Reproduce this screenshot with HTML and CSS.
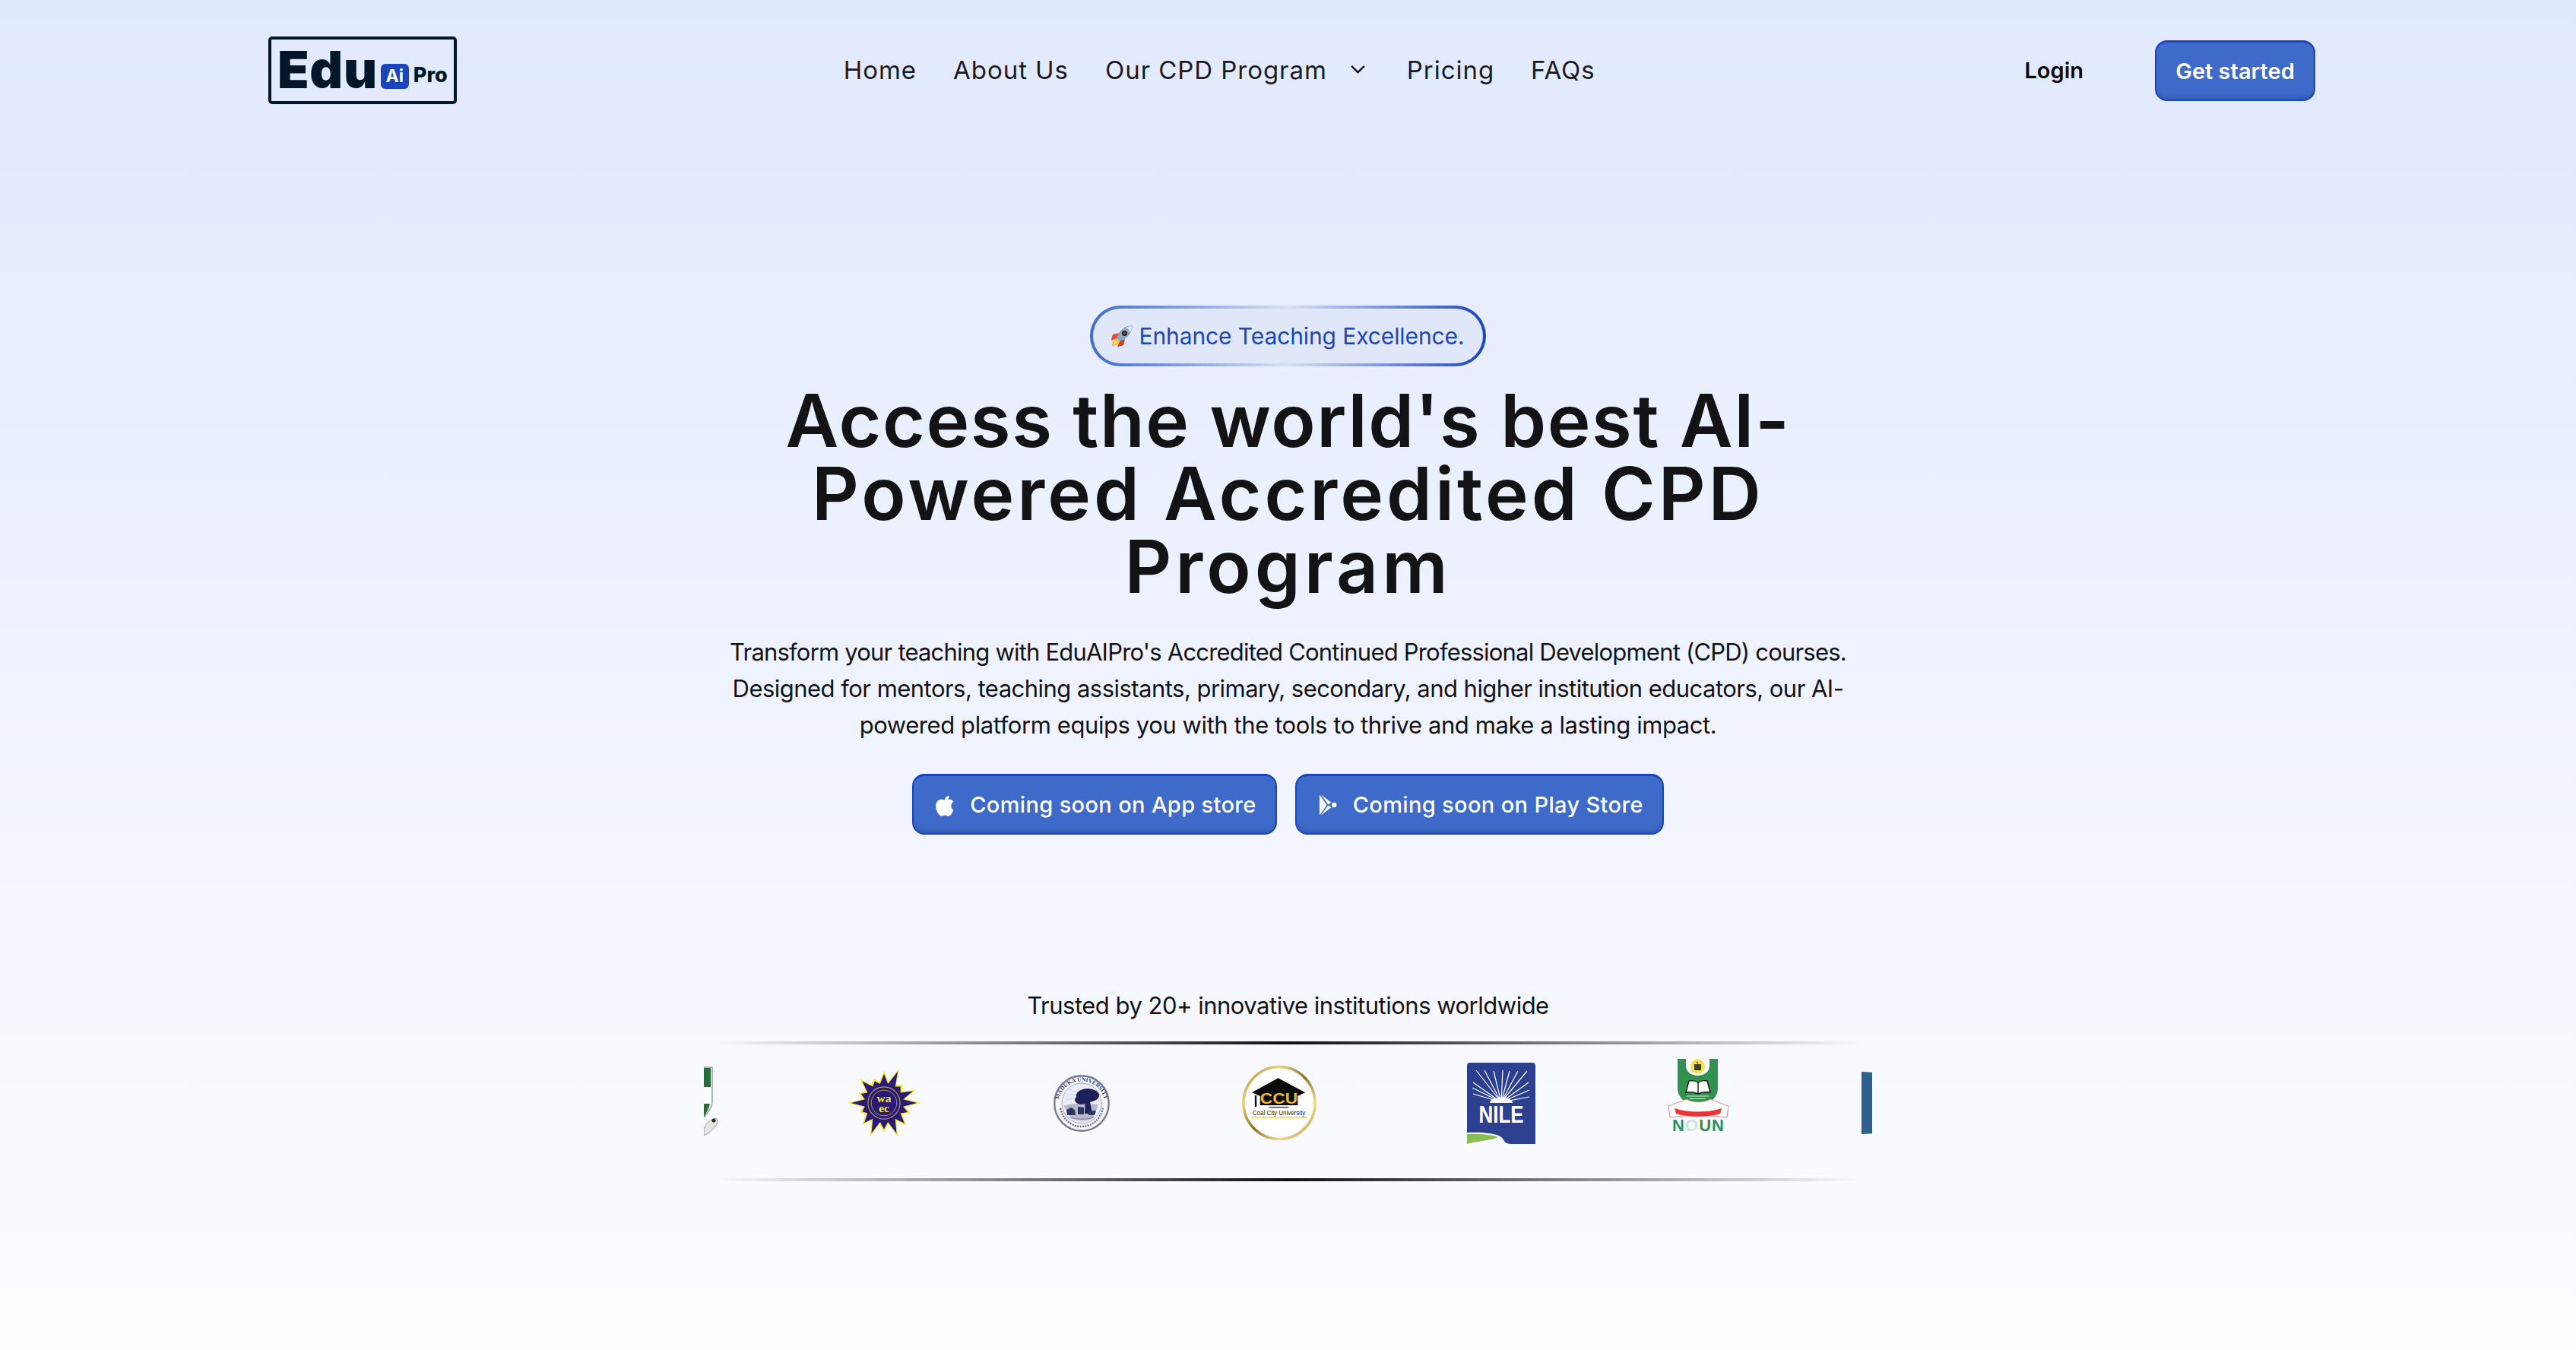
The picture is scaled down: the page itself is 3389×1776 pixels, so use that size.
FILE: index.html
```html
<!DOCTYPE html>
<html lang="en">
<head>
    <meta charset="UTF-8">
    <meta name="viewport" content="width=device-width, initial-scale=1.0">
    <title>EduAiPro</title>
    <link rel="stylesheet" href="styles.css">
</head>
<body>
    <header class="site-header">
        <a class="logo" href="#">
            <span class="logo-edu">Edu</span>
            <span class="logo-ai">Ai</span>
            <span class="logo-pro">Pro</span>
        </a>
        <nav class="main-nav">
            <a href="#">Home</a>
            <a href="#">About Us</a>
            <a class="has-menu" href="#">Our CPD Program
                <svg class="chevron" viewBox="0 0 24 14" fill="none" stroke="#1b1b1f" stroke-width="2.6"><path d="M3 2l9 9 9-9"/></svg>
            </a>
            <a href="#">Pricing</a>
            <a href="#">FAQs</a>
        </nav>
        <div class="header-actions">
            <a class="login" href="#">Login</a>
            <a class="btn btn-start" href="#">Get started</a>
        </div>
    </header>

    <main class="hero">
        <div class="badge">
            <svg class="rocket" viewBox="0 0 28 28">
                <path d="M10 10L2 12-.5 20l8-3z" fill="#e4472c"/>
                <path d="M18 18l-2 8-8 2.500 3-8z" fill="#d83c25"/>
                <path d="M6 17c-4 2-5 7-5 10 3 0 8-1 10-5z" fill="#f8b82e"/>
                <path d="M5.500 19.500c-1.500 1.500-2 3.500-2 5 2 0 4-1 5-2.500z" fill="#fde98a"/>
                <path d="M27.500.5C20 1 13 5 9.500 12L7 16.500l4.500 4.500 4.500-2.500c7-4 11-11 11.500-18z" fill="#8fa9c0" stroke="#5f7a92" stroke-width=".6"/>
                <path d="M27.500.5c-3 .2-6 1.200-8.500 3 3 .7 5 2.700 5.700 5.700 1.800-2.700 2.700-5.700 2.800-8.700z" fill="#dfe7ee"/>
                <circle cx="17.500" cy="10.500" r="3.600" fill="#1c2733"/>
                <circle cx="17.500" cy="10.500" r="1.500" fill="#c8432c"/>
            </svg>
            <span>Enhance Teaching Excellence.</span>
        </div>
        <h1>
            <span class="h1-line">Access the world's best AI-</span>
            <span class="h1-line h1-line-two">Powered Accredited CPD</span>
            <span class="h1-line h1-line-three">Program</span>
        </h1>
        <p class="intro">
            <span class="intro-line">Transform your teaching with EduAIPro's Accredited Continued Professional Development (CPD) courses.</span>
            <span class="intro-line intro-line-two">Designed for mentors, teaching assistants, primary, secondary, and higher institution educators, our AI-</span>
            <span class="intro-line intro-line-three">powered platform equips you with the tools to thrive and make a lasting impact.</span>
        </p>
        <div class="store-buttons">
            <a class="btn btn-store" href="#">
                <svg class="store-icon" viewBox="0 0 24 28" fill="#fff"><path d="M17 2c.2 2-.5 3.500-1.500 4.700-1 1.100-2.500 2-4 1.900-.2-1.800.6-3.500 1.500-4.500C14 3 15.600 2.200 17 2zM22.500 20.500c-.7 1.600-1 2.300-1.900 3.700-1.200 1.900-2.900 3.700-4.600 3.700-1.700 0-2.200-1-4.300-1-2.200 0-2.600 1-4.300 1-2 0-3.500-2-4.700-3.900C-.3 19.400-.6 13.500 1.400 10.400 2.800 8.200 5 6.900 7.100 6.900c2.100 0 3.500 1.100 5.200 1.100 1.700 0 2.700-1.100 5.200-1.100 1.900 0 3.800 1 5.200 2.700-4.600 2.500-3.800 9.100-.2 10.900z"/></svg>
                Coming soon on App store
            </a>
            <a class="btn btn-store" href="#">
                <svg class="store-icon" viewBox="0 0 26 28" fill="#fff"><path d="M1 0l10 14L1 28z"/><path d="M3 0l14 10.500-4 3z"/><path d="M3 28l14-10.500-4-3z"/><circle cx="21" cy="14" r="3.400"/></svg>
                Coming soon on Play Store
            </a>
        </div>

        <p class="trusted">Trusted by 20+ innovative institutions worldwide</p>
        <div class="logo-strip">
            <div class="logo-track">
                <svg class="inst inst-kwasu" viewBox="0 0 100 94">
                    <path d="M60 1h32v46c0 6-4 12-11 20H60z" fill="#fff" stroke="#8fa695" stroke-width="1.500"/>
                    <path d="M60 2h30v25H60z" fill="#2c6b3a"/>
                    <path d="M60 49h29c-1 6-4 11-8 17H60z" fill="#2c6b3a"/>
                    <path d="M81 82c2-6 8-12 15-14 3 1 4 4 3 6-4 8-10 13-18 17z" fill="#e3e7e3" stroke="#9aa29c" stroke-width="1"/>
                    <circle cx="94" cy="71" r="2.500" fill="#222"/>
                </svg>
                <svg class="inst inst-waec" viewBox="-50 -50 100 100">
                    <defs>
                        <polygon id="burst" points="50,0 29,5.500 36,13.800 25,15.600 31,31 17,24 19.100,46.200 6,29 0,40 -6,29 -19.100,46.200 -17,24 -30,30 -25,15.600 -33,13 -29,5.500 -50,0 -29,-5.500 -35,-13.800 -25,-15.600 -33,-33 -17,-25 -14,-33 -6,-29 0,-44 6,-29 21,-48 17,-25 25,-25 25,-15.600 44,-18 29,-5.500"/>
                    </defs>
                    <use href="#burst" fill="#f4e92a"/>
                    <use href="#burst" fill="#2a1a78" transform="scale(.9)"/>
                    <circle r="22" fill="#2a1a78" stroke="#b59f4a" stroke-width="1.200"/>
                    <circle r="17.500" fill="none" stroke="#b59f4a" stroke-width="1"/>
                    <text class="waec-text" y="-1" text-anchor="middle">wa</text>
                    <text class="waec-text" y="12" text-anchor="middle">ec</text>
                </svg>
                <svg class="inst inst-seal" viewBox="0 0 74 75">
                    <ellipse cx="37" cy="37.500" rx="35.800" ry="36.300" fill="#f6f7fb" stroke="#777996" stroke-width="2.400"/>
                    <ellipse cx="37" cy="37.500" rx="26" ry="26.500" fill="#eceef5" stroke="#8e90a8" stroke-width=".8"/>
                    <path id="sealArc" d="M6.500 37C7 19 20 6.500 37 6.500S67 19 67.500 37" fill="none" transform="translate(0 2)"/>
                    <text class="seal-text"><textPath href="#sealArc" startOffset="50%" text-anchor="middle">MADUKA UNIVERSITY</textPath></text>
                    <path d="M9 44C13 60 24 68 37 68s24-8 28-24" fill="none" stroke="#6f7190" stroke-width="2.400" stroke-dasharray="2 1.400"/>
                    <g stroke="#c4c7d8" stroke-width=".7">
                        <path d="M33 26L17 26M33 29L16 33M33 23L20 19M36 22L28 14"/>
                    </g>
                    <path d="M13 41c8-3 18-4 46-2l-6 17c-8 6-22 6-30 0z" fill="#b6b9cc"/>
                    <ellipse cx="45" cy="27" rx="15" ry="9" fill="#1c2257"/>
                    <ellipse cx="37" cy="33" rx="9" ry="6" fill="#1c2257"/>
                    <path d="M42 30h5l4 21h-10z" fill="#1c2257"/>
                    <path d="M17 46l6-3 5 3 1 7H18zM32 42l8 1v9h-8zM46 48l10-1-2 6H46z" fill="#2e3462"/>
                    <path d="M21 56c8 3 24 3 32 0" fill="none" stroke="#7b7e9c" stroke-width="1"/>
                </svg>
                <svg class="inst inst-ccu" viewBox="0 0 100 100">
                    <defs>
                        <linearGradient id="gold" x1="0" y1="0" x2="1" y2="1">
                            <stop offset="0" stop-color="#a98a3a"/>
                            <stop offset=".25" stop-color="#e8d27a"/>
                            <stop offset=".5" stop-color="#8c6f26"/>
                            <stop offset=".75" stop-color="#f0dc8c"/>
                            <stop offset="1" stop-color="#b08f34"/>
                        </linearGradient>
                    </defs>
                    <ellipse cx="49.500" cy="50" rx="47.500" ry="48" fill="#fff" stroke="url(#gold)" stroke-width="3.600"/>
                    <path d="M48 17l36 19-10 5v12H24V41l-11-5z" fill="#0a0a0a"/>
                    <path d="M17 40h2.400v15H17z" fill="#0a0a0a"/>
                    <text class="ccu-mark" x="49" y="51" text-anchor="middle" textLength="50" lengthAdjust="spacingAndGlyphs">CCU</text>
                    <path d="M36 55h26v1.400H36z" fill="#333"/>
                    <text class="ccu-name" x="49" y="66" text-anchor="middle" textLength="70" lengthAdjust="spacingAndGlyphs">Coal City University</text>
                    <path d="M12 68.500h75v1.800H12z" fill="#ecd27a"/>
                </svg>
                <svg class="inst inst-nile" viewBox="0 0 90 107">
                    <path d="M4 0h82a4 4 0 0 1 4 4v103H58c-8 0-9-4-11-7-3-5-17-9-47-8V4a4 4 0 0 1 4-4z" fill="#2d408f"/>
                    <path d="M0 94c16-1 34 1 41 4-7 4-27 5-41 9z" fill="#8bbd55"/>
                    <g stroke="#fff" stroke-width="1.200" fill="none">
                        <path d="M45 52L12 10M45 52L23 10M45 52L35 11M45 52L47 10M45 52L56 11M45 52L67 11M45 52L79 11M45 52L81 26M45 52L82 36M45 52L82 45M45 52L8 41M45 52L7 33M45 52L8 26"/>
                    </g>
                    <path d="M30 53a15 7 0 0 1 30 0z" fill="#fff"/>
                    <text class="nile-text" x="45" y="79" text-anchor="middle" textLength="59" lengthAdjust="spacingAndGlyphs">NILE</text>
                </svg>
                <svg class="inst inst-noun" viewBox="0 0 81 100">
                    <path d="M13 0h53v38c0 13-11 23-26.500 23S13 51 13 38z" fill="#32914f"/>
                    <path d="M24 0h31v9c0 8-7 13-15.500 13S24 17 24 9z" fill="#fbfbff"/>
                    <circle cx="39.500" cy="10" r="9.500" fill="#f0e24a"/>
                    <path d="M35 7h9v8h-9z" fill="#3a4029"/>
                    <path d="M39 3l1.500 3h-3z" fill="#c9342b"/>
                    <path d="M28 29c5-1 9 0 12 2 3-2 7-3 12-2l4 15c-6-1-11 0-16 2-5-2-10-3-16-2z" fill="#fff" stroke="#111" stroke-width="1.400"/>
                    <path d="M40 31v15" stroke="#111" stroke-width="1.400"/>
                    <path d="M25 49h29M29 52.500h21" stroke="#d5ecd9" stroke-width="1"/>
                    <path d="M1 62l24-9c6 5 25 5 31 0l24 9-2 15-20-2H21l-18 2z" fill="#fcfcff" stroke="#e68a8a" stroke-width="1"/>
                    <path d="M9 65c18 6 44 6 62 0l-2 7c-16 5-42 5-58 0z" fill="#ea3434"/>
                    <text class="noun-text" x="40" y="95" text-anchor="middle" textLength="68">N<tspan fill="#c8e6d0">O</tspan>UN</text>
                </svg>
                <svg class="inst inst-tail" viewBox="0 0 100 82">
                    <path d="M0 0l100 6v70L0 82z" fill="#2f5f8c"/>
                </svg>
            </div>
        </div>
    </main>
</body>
</html>
```

FILE: styles.css
```css
/* Page background */
html, body {
    margin: 0;
    padding: 0;
}

body {
    min-height: 1776px;
    font-family: "Inter", "Liberation Sans", sans-serif;
    color: #131316;
    background: linear-gradient(180deg, #e1e9fd 0%, #fdfdff 100%);
    overflow: hidden;
}

a {
    color: inherit;
    text-decoration: none;
}

/* Header */
.site-header {
    display: flex;
    align-items: center;
    justify-content: space-between;
    padding: 48px 343px 0 353px;
    height: 89px;
}

.logo {
    display: flex;
    align-items: flex-end;
    box-sizing: border-box;
    width: 248px;
    height: 89px;
    padding: 0 0 16px 8px;
    border: 4px solid #05162b;
    border-radius: 5px;
    color: #05162b;
}

.logo-edu {
    font-size: 68px;
    font-weight: 900;
    line-height: 52px;
    letter-spacing: 0.7px;
}

.logo-ai {
    margin: 0 6px 0 4px;
    flex: none;
    width: 37px;
    height: 33px;
    border-radius: 6px;
    background: #1c45bb;
    color: #fff;
    font-size: 23px;
    font-weight: 700;
    line-height: 33px;
    text-align: center;
}

.logo-pro {
    font-size: 27px;
    font-weight: 800;
    line-height: 36px;
}

.main-nav {
    display: flex;
    align-items: center;
    gap: 48px;
    margin-right: 56px;
    margin-top: -2px;
    font-size: 33px;
    letter-spacing: 0.95px;
    color: #1b1b1f;
}

.has-menu {
    display: flex;
    align-items: center;
    gap: 29px;
    padding-right: 5px;
}

.chevron {
    width: 23px;
    height: 13px;
}

.header-actions {
    display: flex;
    align-items: center;
    gap: 94px;
}

.login {
    font-size: 29px;
    font-weight: 600;
    color: #0b0b0e;
}

/* Buttons */
.btn {
    display: flex;
    align-items: center;
    justify-content: center;
    box-sizing: border-box;
    height: 80px;
    border: 2px solid #1c45bb;
    border-top-width: 3px;
    border-radius: 16px;
    background: #3e6bc9;
    box-shadow: inset 0 -6px 6px -4px rgba(20, 50, 130, 0.45);
    color: #fff;
}

.btn-start {
    width: 211px;
    font-size: 29px;
    font-weight: 600;
}

.btn-store {
    gap: 20px;
    padding: 0 25px 0 29px;
    font-size: 29px;
    font-weight: 500;
    letter-spacing: 0.35px;
}

.store-icon {
    width: 25px;
    height: 30px;
}

/* Hero */
.hero {
    display: flex;
    flex-direction: column;
    align-items: center;
    padding-top: 265px;
}

.badge {
    display: flex;
    align-items: center;
    gap: 8px;
    box-sizing: border-box;
    height: 80px;
    padding: 0 24px;
    border: 4px solid transparent;
    border-radius: 40px;
    background:
        linear-gradient(#e0e7f9, #e0e7f9) padding-box,
        linear-gradient(90deg, #3e6bc9 0%, #d5e0f5 50%, #1c45bb 100%) border-box;
    color: #1c45bb;
    font-size: 30px;
    letter-spacing: -0.1px;
}

.rocket {
    width: 28px;
    height: 28px;
}

h1 {
    margin: 23px 0 0;
    font-size: 96px;
    font-weight: 600;
    line-height: 96px;
    text-align: center;
    color: #131316;
}

.h1-line {
    display: block;
    letter-spacing: 1.6px;
}

.h1-line-two {
    letter-spacing: 4px;
}

.h1-line-three {
    letter-spacing: 5px;
}

.intro {
    margin: 41px 0 0;
    font-size: 31px;
    line-height: 48px;
    text-align: center;
}

.intro-line {
    display: block;
    letter-spacing: -0.8px;
}

.intro-line-two {
    letter-spacing: -0.53px;
}

.intro-line-three {
    letter-spacing: -0.42px;
}

.store-buttons {
    display: flex;
    gap: 24px;
    margin-top: 40px;
}

/* Institutions strip */
.trusted {
    margin: 201px 0 0;
    font-size: 31px;
    line-height: 48px;
    letter-spacing: -0.5px;
}

.logo-strip {
    position: relative;
    box-sizing: border-box;
    width: 1537px;
    height: 184px;
    margin-top: 23px;
    overflow: hidden;
}

.logo-strip::before,
.logo-strip::after {
    content: "";
    position: absolute;
    left: 0;
    right: 0;
    height: 4px;
    background: linear-gradient(90deg, rgba(17, 17, 17, 0) 1%, #111 50%, rgba(17, 17, 17, 0) 99%);
}

.logo-strip::before {
    top: 0;
}

.logo-strip::after {
    bottom: 0;
}

.logo-track {
    display: flex;
    align-items: center;
    gap: 174px;
    height: 162px;
    margin-left: -81px;
}

.inst {
    flex: none;
}

.inst-kwasu {
    width: 100px;
    height: 94px;
    margin-top: -2px;
    margin-right: -5px;
}

.inst-waec {
    width: 98px;
    height: 96px;
}

.inst-seal {
    width: 74px;
    height: 75px;
}

.inst-ccu {
    width: 99px;
    height: 100px;
}

.inst-nile {
    width: 90px;
    height: 107px;
    margin-left: 23px;
}

.inst-noun {
    width: 81px;
    height: 100px;
    margin-top: -16px;
}

.inst-tail {
    width: 100px;
    height: 82px;
}

/* Text inside the institution logos */
.waec-text {
    font-family: "Liberation Serif", serif;
    font-size: 16px;
    font-weight: 700;
    fill: #f4e92a;
}

.seal-text {
    font-family: "Liberation Serif", serif;
    font-size: 7.500px;
    font-weight: 700;
    fill: #3a3d66;
}

.ccu-mark {
    font-family: "Liberation Sans", sans-serif;
    font-size: 21px;
    font-weight: 700;
    fill: #f0b62f;
}

.ccu-name {
    font-family: "Liberation Sans", sans-serif;
    font-size: 9.500px;
    fill: #222;
}

.nile-text {
    font-family: "Liberation Sans", sans-serif;
    font-size: 31px;
    font-weight: 700;
    fill: #fff;
}

.noun-text {
    font-family: "Liberation Sans", sans-serif;
    font-size: 22px;
    font-weight: 700;
    fill: #32914f;
}
```
